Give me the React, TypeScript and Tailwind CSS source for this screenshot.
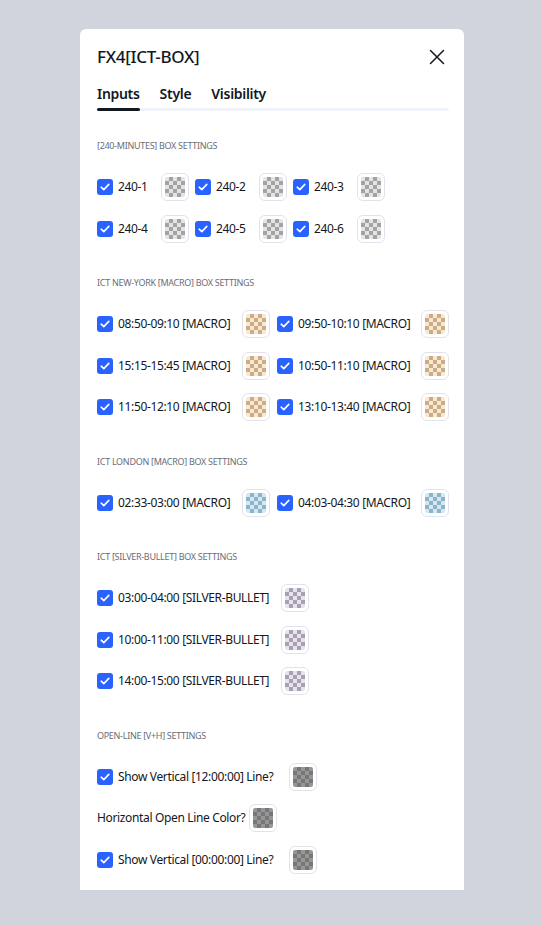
import React from "react";

type Tone = "gray" | "tan" | "blue" | "purple" | "dark";

const checker: Record<Tone, string> = {
  gray: "bg-[conic-gradient(#a3a3a3_25%,#e4e4e4_0_50%,#a3a3a3_0_75%,#e4e4e4_0)]",
  tan: "bg-[conic-gradient(#c8ad8c_25%,#fae7cc_0_50%,#c8ad8c_0_75%,#fae7cc_0)]",
  blue: "bg-[conic-gradient(#8db3c6_25%,#d3e8f2_0_50%,#8db3c6_0_75%,#d3e8f2_0)]",
  purple: "bg-[conic-gradient(#a8a0b0_25%,#e7e3ec_0_50%,#a8a0b0_0_75%,#e7e3ec_0)]",
  dark: "bg-[conic-gradient(#777777_25%,#979797_0_50%,#777777_0_75%,#979797_0)]",
};

function Swatch({ tone }: { tone: Tone }) {
  return (
    <div className="w-[28px] h-[28px] shrink-0 rounded-[6px] border border-[#e0e3eb] bg-white flex items-center justify-center">
      <div className={`w-[20px] h-[20px] rounded-[2px] bg-[length:8px_8px] ${checker[tone]}`} />
    </div>
  );
}

function Check() {
  return (
    <div className="w-[16px] h-[16px] shrink-0 rounded-[3px] bg-[#2962ff] flex items-center justify-center">
      <svg width="10" height="8" viewBox="0 0 10 8" fill="none">
        <path d="M1.2 4.2 L3.8 6.6 L8.8 1.4" stroke="white" strokeWidth="1.6" strokeLinecap="round" strokeLinejoin="round" />
      </svg>
    </div>
  );
}

function CheckItem({ label, tone, w }: { label: string; tone: Tone; w: string }) {
  return (
    <div className="flex items-center">
      <div className={`flex items-center ${w}`}>
        <Check />
        <span className="ml-[5px] text-[12px] tracking-[-0.35px] leading-[16px] text-[#131722] whitespace-nowrap">{label}</span>
      </div>
      <Swatch tone={tone} />
    </div>
  );
}

function Header({ children }: { children: React.ReactNode }) {
  return (
    <div className="h-[14px] leading-[14px] text-[9px] tracking-[-0.3px] text-[#6a6d78] uppercase whitespace-nowrap">
      {children}
    </div>
  );
}

export default function App() {
  return (
    <div
      className="min-h-[925px] bg-[#d1d4dc] pt-[29px] pl-[80px]"
      style={{ fontFamily: '"Noto Sans", "Open Sans", sans-serif' }}
    >
      <div className="w-[384px] bg-white rounded-t-[6px] pl-[17px] pr-[15px] pt-[16px] pb-[16px]">
        <div className="flex items-center justify-between h-[24px]">
          <div className="text-[17px] tracking-[-0.3px] font-medium text-[#131722] leading-[24px]">FX4[ICT-BOX]</div>
          <svg width="24" height="24" viewBox="0 0 24 24" fill="none">
            <path d="M5.5 5.5 L18.5 18.5 M18.5 5.5 L5.5 18.5" stroke="#131722" strokeWidth="1.5" strokeLinecap="round" />
          </svg>
        </div>

        <div className="mt-[15px] relative">
          <div className="flex gap-[20px] text-[14px] tracking-[-0.3px] leading-[20px] font-semibold text-[#131722] pb-[4px]">
            <div className="relative">
              Inputs
              <div className="absolute left-0 right-0 -bottom-[7px] h-[3px] rounded-full bg-[#131722]" />
            </div>
            <div>Style</div>
            <div>Visibility</div>
          </div>
          <div className="h-[3px] bg-[#f0f3fa] rounded-full" />
        </div>

        <div className="mt-[28px]">
          <Header>[240-minutes] box settings</Header>
          <div className="mt-[20px] flex flex-col gap-[13.5px]">
            <div className="flex gap-[6px]">
              <CheckItem label="240-1" tone="gray" w="w-[64px]" />
              <CheckItem label="240-2" tone="gray" w="w-[64px]" />
              <CheckItem label="240-3" tone="gray" w="w-[64px]" />
            </div>
            <div className="flex gap-[6px]">
              <CheckItem label="240-4" tone="gray" w="w-[64px]" />
              <CheckItem label="240-5" tone="gray" w="w-[64px]" />
              <CheckItem label="240-6" tone="gray" w="w-[64px]" />
            </div>
          </div>
        </div>

        <div className="mt-[33.5px]">
          <Header>ICT New-York [Macro] box settings</Header>
          <div className="mt-[20px] flex flex-col gap-[13.5px]">
            <div className="flex gap-[7px]">
              <CheckItem label="08:50-09:10 [MACRO]" tone="tan" w="w-[145px]" />
              <CheckItem label="09:50-10:10 [MACRO]" tone="tan" w="w-[144px]" />
            </div>
            <div className="flex gap-[7px]">
              <CheckItem label="15:15-15:45 [MACRO]" tone="tan" w="w-[145px]" />
              <CheckItem label="10:50-11:10 [MACRO]" tone="tan" w="w-[144px]" />
            </div>
            <div className="flex gap-[7px]">
              <CheckItem label="11:50-12:10 [MACRO]" tone="tan" w="w-[145px]" />
              <CheckItem label="13:10-13:40 [MACRO]" tone="tan" w="w-[144px]" />
            </div>
          </div>
        </div>

        <div className="mt-[33.5px]">
          <Header>ICT London [Macro] box settings</Header>
          <div className="mt-[20px] flex flex-col gap-[13.5px]">
            <div className="flex gap-[7px]">
              <CheckItem label="02:33-03:00 [MACRO]" tone="blue" w="w-[145px]" />
              <CheckItem label="04:03-04:30 [MACRO]" tone="blue" w="w-[144px]" />
            </div>
          </div>
        </div>

        <div className="mt-[33.5px]">
          <Header>ICT [Silver-Bullet] box settings</Header>
          <div className="mt-[20px] flex flex-col gap-[13.5px]">
            <CheckItem label="03:00-04:00 [SILVER-BULLET]" tone="purple" w="w-[184px]" />
            <CheckItem label="10:00-11:00 [SILVER-BULLET]" tone="purple" w="w-[184px]" />
            <CheckItem label="14:00-15:00 [SILVER-BULLET]" tone="purple" w="w-[184px]" />
          </div>
        </div>

        <div className="mt-[33.5px]">
          <Header>Open-Line [V+H] settings</Header>
          <div className="mt-[20px] flex flex-col gap-[13.5px]">
            <CheckItem label="Show Vertical [12:00:00] Line?" tone="dark" w="w-[192px]" />
            <div className="flex items-center">
              <span className="w-[152px] text-[12px] tracking-[-0.35px] leading-[16px] text-[#131722] whitespace-nowrap">Horizontal Open Line Color?</span>
              <Swatch tone="dark" />
            </div>
            <CheckItem label="Show Vertical [00:00:00] Line?" tone="dark" w="w-[192px]" />
          </div>
        </div>
      </div>
    </div>
  );
}
